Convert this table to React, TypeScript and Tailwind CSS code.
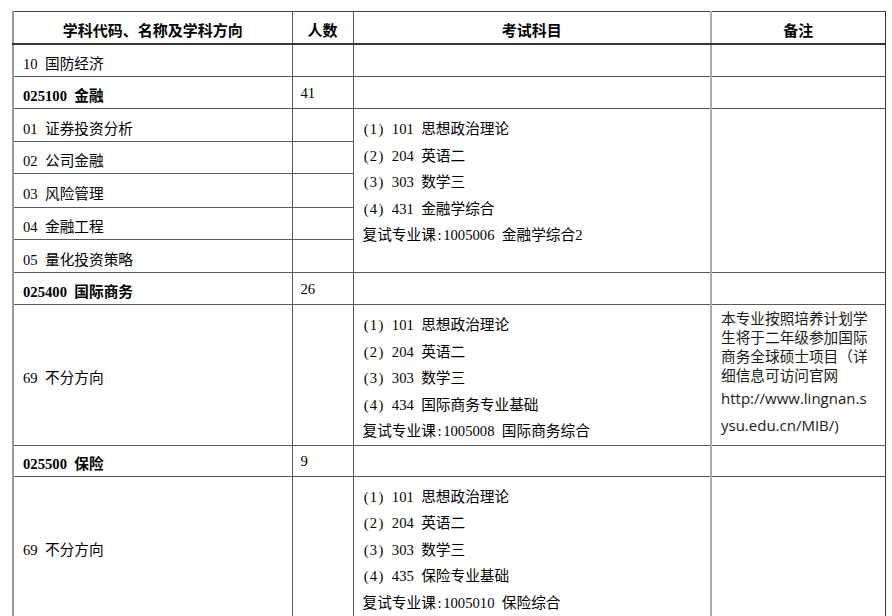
import React from 'react';

const isHalf = (c: string) => c.charCodeAt(0) < 0x2e80;

// SimSun-like layout: every latin char takes half a CJK cell
const Txt = ({ s }: { s: string }) => (
  <>
    {Array.from(s).map((c, i) =>
      isHalf(c) ? (
        <span key={i} className="inline-block w-[7.33px] text-center">
          {c === ' ' ? '\u00a0' : c}
        </span>
      ) : (
        <React.Fragment key={i}>{c}</React.Fragment>
      )
    )}
  </>
);

const subjA = ['(1) 101 思想政治理论', '(2) 204 英语二', '(3) 303 数学三', '(4) 431 金融学综合', '复试专业课:1005006 金融学综合2'];
const subjB = ['(1) 101 思想政治理论', '(2) 204 英语二', '(3) 303 数学三', '(4) 434 国际商务专业基础', '复试专业课:1005008 国际商务综合'];
const subjC = ['(1) 101 思想政治理论', '(2) 204 英语二', '(3) 303 数学三', '(4) 435 保险专业基础', '复试专业课:1005010 保险综合'];

const base = 'border border-[#5a5a5a] p-0';
const c1 = `${base} border-l-2 border-l-[#9a9a9a] align-middle pl-[9px] pt-[7px] whitespace-nowrap`;
const c2 = `${base} align-middle pl-[8px]`;
const c3 = `${base} align-top pl-[9px] pt-[7px]`;
const c4 = `${base} border-l-2 border-l-[#ababab] border-r-[#333] align-top pl-[9px]`;

const Subjects = ({ lines }: { lines: string[] }) => (
  <div className="leading-[26.5px] whitespace-nowrap">
    {lines.map((l, i) => (
      <div key={i}>
        <Txt s={l} />
      </div>
    ))}
  </div>
);

const Row = ({ name, bold, count, h }: { name: string; bold?: boolean; count?: string; h: number }) => (
  <tr style={{ height: h }}>
    <td className={`${c1} ${bold ? 'font-bold' : ''}`}>
      <Txt s={name} />
    </td>
    <td className={c2}>{count}</td>
    <td className={c3}></td>
    <td className={c4}></td>
  </tr>
);

export default function App() {
  return (
    <div className="w-[892px] h-[616px] bg-white overflow-hidden pt-[11px] pl-[12px] text-black text-[14.67px] font-['Liberation_Serif','Noto_Sans_CJK_SC',serif]">
      <table className="border-collapse table-fixed w-[872px]">
        <colgroup>
          <col className="w-[279px]" />
          <col className="w-[61px]" />
          <col className="w-[358px]" />
          <col className="w-[174px]" />
        </colgroup>
        <tbody>
          <tr className="h-[32px] font-bold text-[15px]">
            <td className={`${base} border-l-2 border-l-[#9a9a9a] border-t-[#444] border-b-2 border-b-[#333] text-center pt-[7px]`}>学科代码、名称及学科方向</td>
            <td className={`${base} border-t-[#444] border-b-2 border-b-[#333] text-center pt-[7px]`}>人数</td>
            <td className={`${base} border-t-[#444] border-b-2 border-b-[#333] text-center pt-[7px]`}>考试科目</td>
            <td className={`${base} border-l-2 border-l-[#ababab] border-t-[#444] border-r-[#333] border-b-2 border-b-[#333] text-center pt-[7px]`}>备注</td>
          </tr>
          <Row name="10 国防经济" h={33} />
          <Row name="025100 金融" bold count="41" h={32} />
          <tr className="h-[33px]">
            <td className={c1}><Txt s="01 证券投资分析" /></td>
            <td className={c2}></td>
            <td className={c3} rowSpan={5}><Subjects lines={subjA} /></td>
            <td className={c4} rowSpan={5}></td>
          </tr>
          <tr className="h-[32px]">
            <td className={c1}><Txt s="02 公司金融" /></td>
            <td className={c2}></td>
          </tr>
          <tr className="h-[34px]">
            <td className={c1}><Txt s="03 风险管理" /></td>
            <td className={c2}></td>
          </tr>
          <tr className="h-[32px]">
            <td className={c1}><Txt s="04 金融工程" /></td>
            <td className={c2}></td>
          </tr>
          <tr className="h-[33px]">
            <td className={c1}><Txt s="05 量化投资策略" /></td>
            <td className={c2}></td>
          </tr>
          <Row name="025400 国际商务" bold count="26" h={32} />
          <tr className="h-[137px]">
            <td className={c1}><Txt s="69 不分方向" /></td>
            <td className={c2}></td>
            <td className={c3}><Subjects lines={subjB} /></td>
            <td className={`${c4} pt-[4px]`}>
              <div className="font-['Open_Sans','Noto_Sans_CJK_SC',sans-serif] text-[14.67px] text-[#1a1a1a] whitespace-nowrap">
                <div className="leading-[19px]">
                  <div>本专业按照培养计划学</div>
                  <div>生将于二年级参加国际</div>
                  <div>商务全球硕士项目（详</div>
                  <div>细信息可访问官网</div>
                </div>
                <div className="leading-[27px] text-[15px]">
                  <div>http://www.lingnan.s</div>
                  <div>ysu.edu.cn/MIB/)</div>
                </div>
              </div>
            </td>
          </tr>
          <Row name="025500 保险" bold count="9" h={31} />
          <tr className="h-[138px]">
            <td className={`${c1} border-b-2 border-b-[#999]`}><Txt s="69 不分方向" /></td>
            <td className={`${c2} border-b-2 border-b-[#999]`}></td>
            <td className={`${c3} pt-[6px] border-b-2 border-b-[#999]`}><Subjects lines={subjC} /></td>
            <td className={`${c4} border-b-2 border-b-[#999]`}></td>
          </tr>
        </tbody>
      </table>
    </div>
  );
}
